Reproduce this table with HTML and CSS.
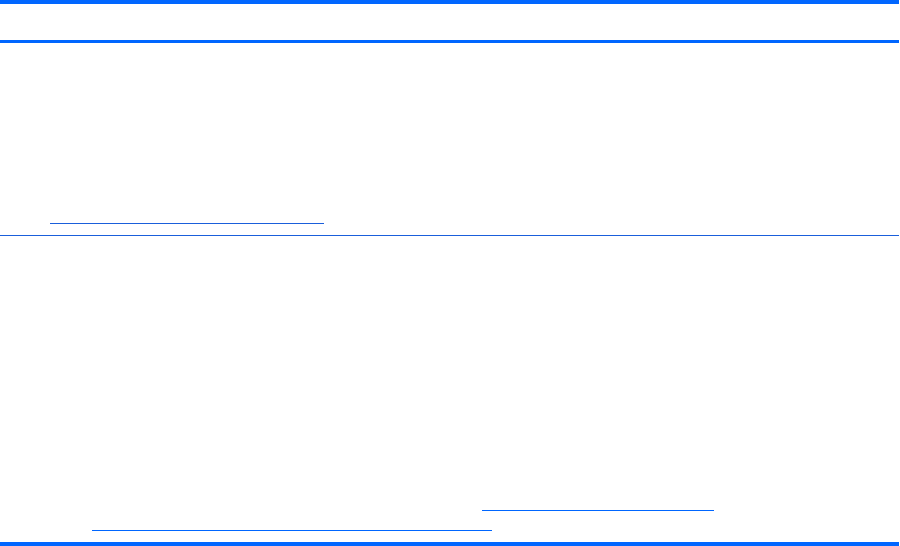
FILE: index.html
```html
<!DOCTYPE html>
<html>
<head>
<meta charset="utf-8">
<link rel="stylesheet" href="styles.css">
</head>
<body>
<div class="page">
  <div class="bar thick"></div>
  <div class="header"></div>
  <div class="bar mid"></div>
  <div class="section first">
    <a class="link l1" href="#"></a>
  </div>
  <div class="section second">
    <a class="link l2" href="#"></a>
    <a class="link l3" href="#"></a>
  </div>
  <div class="bar thick"></div>
</div>
</body>
</html>
```
FILE: styles.css
```css
html, body {
  margin: 0;
  padding: 0;
  background: #ffffff;
  font-family: "Liberation Sans", Arial, sans-serif;
}
.page {
  width: 899px;
  height: 546px;
  display: flex;
  flex-direction: column;
}
.bar {
  background: #0066ff;
  flex: none;
}
.bar.thick { height: 4px; }
.bar.mid { height: 3px; }
.header { height: 36px; flex: none; }
.section {
  display: flex;
  flex-direction: column;
  justify-content: flex-end;
  flex: none;
  box-sizing: border-box;
}
.section.first {
  height: 193px;
  padding-bottom: 11px;
  border-bottom: 1px solid #1a5fdb;
}
.section.second {
  height: 306px;
  padding-bottom: 11px;
  gap: 19px;
}
.link {
  display: block;
  height: 0;
  border-bottom: 1px solid #0066ff;
}
.l1 { margin-left: 50px; width: 274px; border-bottom-color: #1a5fdb; }
.l2 { margin-left: 482px; width: 232px; }
.l3 { margin-left: 92px; width: 400px; }
```
